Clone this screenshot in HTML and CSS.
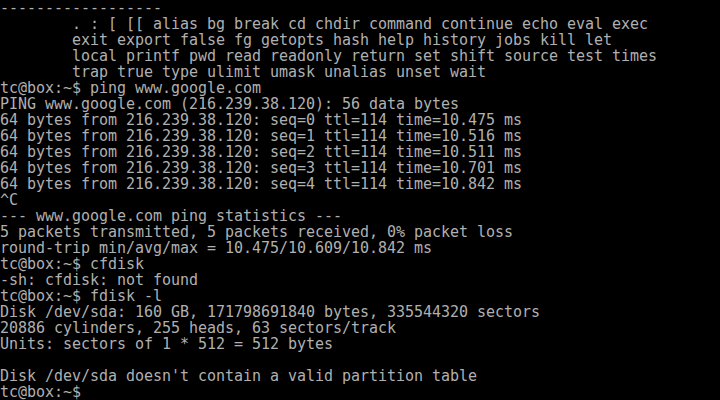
FILE: index.html
```html
<!DOCTYPE html>
<html>
<head>
<meta charset="utf-8">
<link rel="stylesheet" href="styles.css">
</head>
<body>
<pre class="console">------------------
        . : [ [[ alias bg break cd chdir command continue echo eval exec
        exit export false fg getopts hash help history jobs kill let
        local printf pwd read readonly return set shift source test times
        trap true type ulimit umask unalias unset wait
tc@box:~$ ping www.google.com
PING www.google.com (216.239.38.120): 56 data bytes
64 bytes from 216.239.38.120: seq=0 ttl=114 time=10.475 ms
64 bytes from 216.239.38.120: seq=1 ttl=114 time=10.516 ms
64 bytes from 216.239.38.120: seq=2 ttl=114 time=10.511 ms
64 bytes from 216.239.38.120: seq=3 ttl=114 time=10.701 ms
64 bytes from 216.239.38.120: seq=4 ttl=114 time=10.842 ms
^C
--- www.google.com ping statistics ---
5 packets transmitted, 5 packets received, 0% packet loss
round-trip min/avg/max = 10.475/10.609/10.842 ms
tc@box:~$ cfdisk
-sh: cfdisk: not found
tc@box:~$ fdisk -l
Disk /dev/sda: 160 GB, 171798691840 bytes, 335544320 sectors
20886 cylinders, 255 heads, 63 sectors/track
Units: sectors of 1 * 512 = 512 bytes

Disk /dev/sda doesn't contain a valid partition table
tc@box:~$</pre>
</body>
</html>
```
FILE: styles.css
```css
html, body {
  margin: 0;
  padding: 0;
  background: #000;
  width: 720px;
  height: 400px;
  overflow: hidden;
}
.console {
  margin: 0;
  padding: 0;
  font-family: "DejaVu Sans Mono", "Liberation Mono", monospace;
  font-size: 15px;
  letter-spacing: -0.03px;
  line-height: 16px;
  color: #b0b0b0;
  white-space: pre;
}
```
